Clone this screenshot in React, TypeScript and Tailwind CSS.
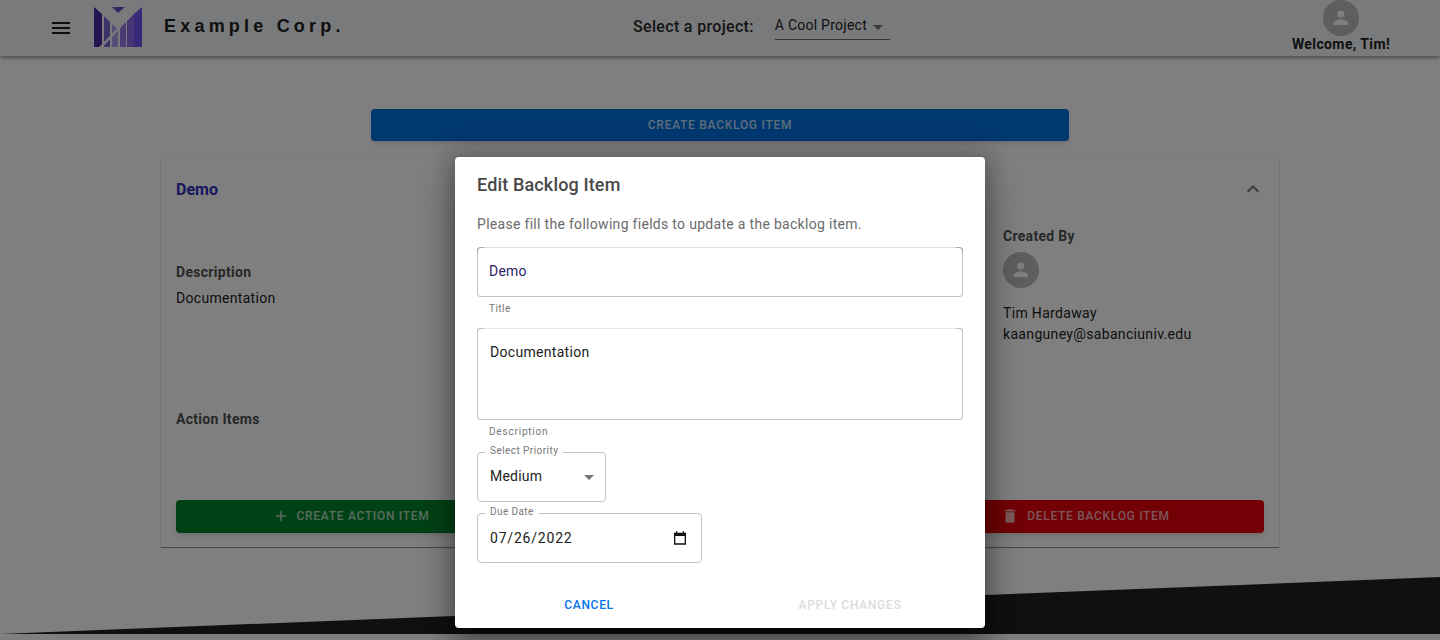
import React from "react";

const Person = ({ className }: { className: string }) => (
  <div className={`rounded-full bg-[#bdbdbd] flex items-center justify-center ${className}`}>
    <svg viewBox="0 0 24 24" className="w-[60%] h-[60%] fill-white">
      <path d="M12 12c2.21 0 4-1.79 4-4s-1.79-4-4-4-4 1.79-4 4 1.79 4 4 4zm0 2c-2.67 0-8 1.34-8 4v2h16v-2c0-2.66-5.33-4-8-4z" />
    </svg>
  </div>
);

const Logo = () => (
  <svg viewBox="0 0 48 40" className="w-12 h-10">
    <polygon points="0,0 8,7 8,40 0,40" fill="#48289f" />
    <polygon points="10,9 16,15 16,40 10,40" fill="#7e64d0" />
    <polygon points="18,17 24,23 24,40 18,40" fill="#b09ae8" />
    <polygon points="26,21 32,15 32,40 26,40" fill="#9878e8" />
    <polygon points="33,14 40,7 40,40 33,40" fill="#8c68ea" />
    <polygon points="40,7 48,0 48,40 40,40" fill="#7052f0" />
    <polygon points="18,0 31,0 24,6" fill="#6a4cc4" />
    <line x1="6" y1="41" x2="26" y2="20" stroke="#f3f4f7" strokeWidth="2.5" />
  </svg>
);

const Notched = ({ className, corners, children }: { className: string; corners?: string; children?: React.ReactNode }) => (
  <div className={`relative rounded border border-[#c4c4c4] ${className}`}>
    {corners && <span className={`absolute -top-px -left-px w-[7px] h-[6px] border-t border-l rounded-tl ${corners}`} />}
    {corners && <span className={`absolute -top-px -right-px w-[7px] h-[6px] border-t border-r rounded-tr ${corners}`} />}
    {children}
  </div>
);

export default function App() {
  return (
    <div className="relative h-[640px] overflow-hidden bg-white font-['Roboto',sans-serif] text-[#212121]">
      <header className="h-14 bg-[#f3f4f7] shadow-[0_2px_4px_rgba(0,0,0,0.4)] flex items-center relative">
        <svg viewBox="0 0 24 24" className="ml-[49px] w-6 h-6 fill-[#1a1a1a]">
          <path d="M3 18h18v-2H3v2zm0-5h18v-2H3v2zm0-7v2h18V6H3z" />
        </svg>
        <div className="ml-[21px] mt-[-2px]"><Logo /></div>
        <div className="ml-[22px] w-[469px] font-['Liberation_Sans',sans-serif] font-bold text-lg tracking-[4.2px] text-[#212121] mt-[-4px]">Example Corp.</div>
        <div className="text-base font-medium mt-[-3px] tracking-[0.33px] text-[#2a2a2a]">Select a project:</div>
        <div className="ml-[21px] w-[115px] h-[28px] border-b border-[#6b6b6b] flex items-center text-sm tracking-[0.25px] mt-[-4px]">
          <span className="mt-[-1px]">A Cool Project</span>
          <span className="ml-[6px] mt-[3px] w-0 h-0 border-x-[5px] border-x-transparent border-t-[5px] border-t-[#757575]" />
        </div>
        <div className="ml-auto w-[198px] flex flex-col items-center self-start">
          <Person className="w-9 h-9" />
          <div className="text-sm font-bold mt-[-2px] tracking-[0.4px]">Welcome, Tim!</div>
        </div>
      </header>

      <main className="h-[521px] flex flex-col items-center">
        <button className="mt-[53px] w-[698px] h-8 rounded bg-[#0070e0] text-white/75 text-xs font-medium tracking-[0.72px] shadow-md">CREATE BACKLOG ITEM</button>
        <section className="mt-4 w-[1118px] h-[390px] bg-white shadow-[0_1px_1px_rgba(0,0,0,0.4),0_0_1px_rgba(0,0,0,0.12)] px-[15px] flex flex-col">
          <div className="flex justify-between items-center pt-[21px]">
            <h2 className="text-base font-bold text-[#2a2fbf]">Demo</h2>
            <svg viewBox="0 0 24 24" className="w-6 h-6 fill-[#757575] mr-[-1px] mt-[-2px]">
              <path d="M12 8l-6 6 1.41 1.41L12 10.83l4.59 4.58L18 14z" />
            </svg>
          </div>
          <div className="flex mt-[23px]">
            <div className="w-[827px] pt-[37px]">
              <h3 className="text-sm font-bold text-[#505050] tracking-[0.3px]">Description</h3>
              <p className="mt-[6px] text-sm tracking-[0.3px]">Documentation</p>
              <h3 className="mt-[101px] text-sm font-bold text-[#505050] tracking-[0.3px]">Action Items</h3>
            </div>
            <div className="pt-px">
              <h3 className="text-sm font-bold text-[#505050] tracking-[0.3px]">Created By</h3>
              <Person className="w-9 h-9 mt-[6px]" />
              <p className="mt-[15px] text-sm tracking-[0.33px]">Tim Hardaway</p>
              <p className="mt-px text-sm tracking-[0.33px]">kaanguney@sabanciuniv.edu</p>
            </div>
          </div>
          <div className="mt-auto mb-[14px] flex justify-between">
            <button className="w-[300px] h-[33px] rounded bg-[#00842c] text-white/70 text-xs font-medium tracking-[0.7px] shadow-md flex items-center justify-center gap-[7px] pl-[49px] pb-px">
              <svg viewBox="0 0 24 24" className="w-[18px] h-[18px] fill-current"><path d="M19 13h-6v6h-2v-6H5v-2h6V5h2v6h6v2z" /></svg>
              CREATE ACTION ITEM
            </button>
            <button className="w-[300px] h-[33px] rounded bg-[#e4000a] text-white/70 text-xs font-medium tracking-[0.7px] shadow-md flex items-center justify-center gap-2 pr-[57px] pb-px">
              <svg viewBox="0 0 24 24" className="w-[18px] h-[18px] fill-current"><path d="M6 19c0 1.1.9 2 2 2h8c1.1 0 2-.9 2-2V7H6v12zM19 4h-3.5l-1-1h-5l-1 1H5v2h14V4z" /></svg>
              DELETE BACKLOG ITEM
            </button>
          </div>
        </section>
      </main>
      <svg viewBox="0 0 1440 57" preserveAspectRatio="none" className="block w-full h-[57px]">
        <polygon points="0,57 1440,0 1440,57" fill="#212121" />
      </svg>

      <div className="absolute inset-0 bg-black/50 flex justify-center items-start pt-[157px]">
        <div className="w-[530px] h-[471px] bg-white rounded shadow-[0_11px_15px_-7px_rgba(0,0,0,0.3),0_24px_38px_3px_rgba(0,0,0,0.2),0_0_24px_8px_rgba(0,0,0,0.2)] px-[22px] flex flex-col">
          <h1 className="pt-[17px] text-lg font-medium leading-[22px] text-[#484848] tracking-[0.15px]">Edit Backlog Item</h1>
          <p className="mt-[18px] text-sm leading-[20px] text-[#6b6b6b] tracking-[0.3px]">Please fill the following fields to update a the backlog item.</p>
          <Notched corners="border-[#aaa]" className="mt-[13px] h-[50px] border-[#aaa] border-t-[#e0e0e0] flex items-center pl-[11px] pb-[2px] text-sm text-[#2d2468] tracking-[0.2px]">Demo</Notched>
          <div className="ml-[12px] text-[10px] leading-3 mt-[6px] text-[#777] tracking-[0.45px]">Title</div>
          <Notched corners="border-[#c4c4c4]" className="mt-[13px] h-[92px] border-t-[#e8e8e8] pl-3 pt-[13px] text-sm tracking-[0.3px]">Documentation</Notched>
          <div className="ml-[12px] text-[10px] leading-3 mt-[6px] text-[#777] tracking-[0.8px]">Description</div>
          <Notched className="mt-[14px] w-[129px] h-[50px] pl-3 pb-[2px] flex items-center text-sm tracking-[0.2px]">
            <span className="absolute left-[7px] -top-[8px] px-[5px] bg-white text-[10px] leading-3 text-[#777] tracking-[0.45px]">Select Priority</span>
            Medium
            <span className="absolute right-[11px] top-[22px] w-0 h-0 border-x-[5px] border-x-transparent border-t-[5px] border-t-[#757575]" />
          </Notched>
          <Notched className="mt-[11px] w-[225px] h-[50px] pl-3 flex items-center text-sm tracking-[0.8px]">
            <span className="absolute left-[7px] -top-[8px] px-[5px] bg-white text-[10px] leading-3 text-[#777] tracking-[0.4px]">Due Date</span>
            07/26/2022
            <svg viewBox="0 0 24 24" className="absolute right-[13px] top-[16px] w-4 h-4 fill-[#111]">
              <path fillRule="evenodd" d="M3 4h3V2h2v2h8V2h2v2h3v18H3zM5 9v11h14V9z" />
            </svg>
          </Notched>
          <div className="mt-auto mb-[15px] flex text-xs font-medium tracking-[0.7px]">
            <div className="w-[224px] text-center text-[#0072ea]">CANCEL</div>
            <div className="ml-[37px] w-[224px] text-center text-[#dcdcdc]">APPLY CHANGES</div>
          </div>
        </div>
      </div>
    </div>
  );
}
